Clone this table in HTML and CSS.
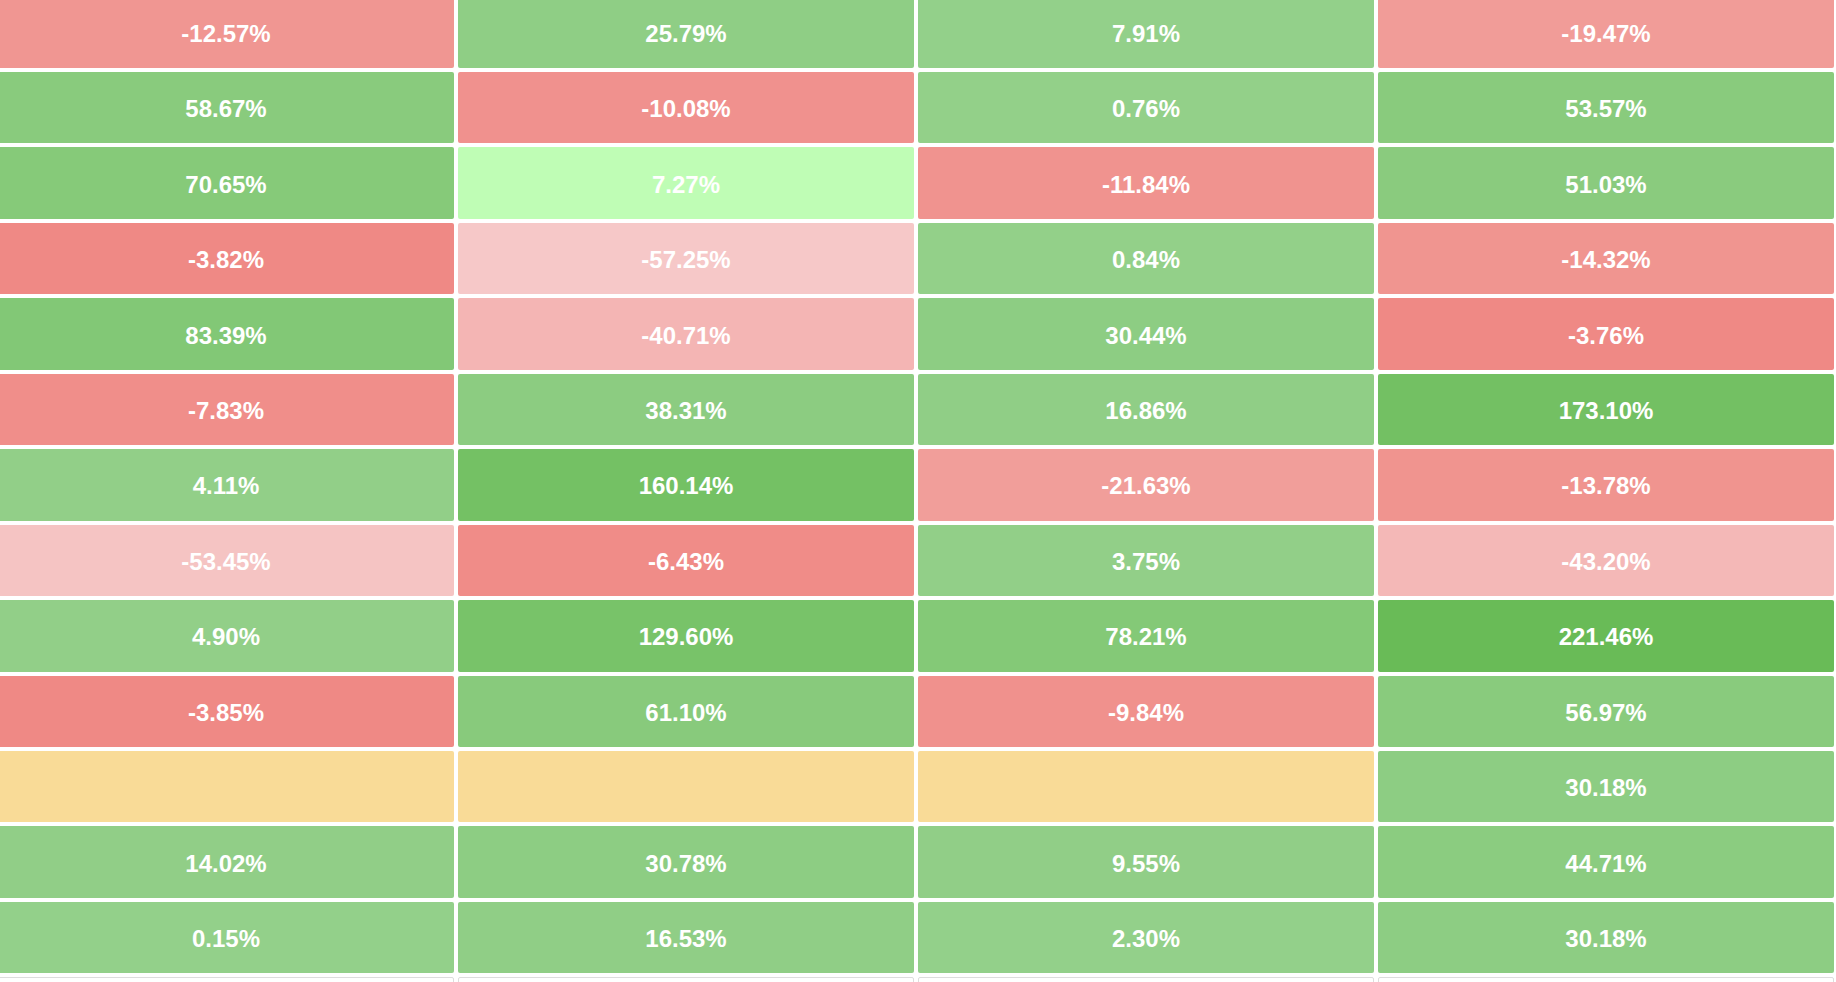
FILE: index.html
```html
<!DOCTYPE html>
<html lang="en">
<head>
<meta charset="utf-8">
<title>Returns heatmap</title>
<link rel="stylesheet" href="styles.css">
</head>
<body>
<div class="heatmap">
  <div class="cell" style="background:#f09692">-12.57%</div>
  <div class="cell" style="background:#8fce85">25.79%</div>
  <div class="cell" style="background:#93d08a">7.91%</div>
  <div class="cell" style="background:#f19c98">-19.47%</div>

  <div class="cell" style="background:#89cb7d">58.67%</div>
  <div class="cell" style="background:#f0918e">-10.08%</div>
  <div class="cell" style="background:#93d089">0.76%</div>
  <div class="cell" style="background:#89cb7d">53.57%</div>

  <div class="cell" style="background:#86ca79">70.65%</div>
  <div class="cell" style="background:#bffdb5">7.27%</div>
  <div class="cell" style="background:#f0938f">-11.84%</div>
  <div class="cell" style="background:#8acb7e">51.03%</div>

  <div class="cell" style="background:#ef8985">-3.82%</div>
  <div class="cell" style="background:#f6c8c8">-57.25%</div>
  <div class="cell" style="background:#93d089">0.84%</div>
  <div class="cell" style="background:#f09590">-14.32%</div>

  <div class="cell" style="background:#82c876">83.39%</div>
  <div class="cell" style="background:#f4b5b4">-40.71%</div>
  <div class="cell" style="background:#8dcd83">30.44%</div>
  <div class="cell" style="background:#ef8985">-3.76%</div>

  <div class="cell" style="background:#f08e8a">-7.83%</div>
  <div class="cell" style="background:#8ccc81">38.31%</div>
  <div class="cell" style="background:#90ce86">16.86%</div>
  <div class="cell" style="background:#73c063">173.10%</div>

  <div class="cell" style="background:#92cf88">4.11%</div>
  <div class="cell" style="background:#74c164">160.14%</div>
  <div class="cell" style="background:#f19e9a">-21.63%</div>
  <div class="cell" style="background:#f0948f">-13.78%</div>

  <div class="cell" style="background:#f5c4c3">-53.45%</div>
  <div class="cell" style="background:#f08c88">-6.43%</div>
  <div class="cell" style="background:#92cf88">3.75%</div>
  <div class="cell" style="background:#f4b8b7">-43.20%</div>

  <div class="cell" style="background:#92cf88">4.90%</div>
  <div class="cell" style="background:#78c369">129.60%</div>
  <div class="cell" style="background:#84c977">78.21%</div>
  <div class="cell" style="background:#69bb57">221.46%</div>

  <div class="cell" style="background:#ef8985">-3.85%</div>
  <div class="cell" style="background:#88ca7c">61.10%</div>
  <div class="cell" style="background:#f0918d">-9.84%</div>
  <div class="cell" style="background:#89cb7d">56.97%</div>

  <div class="cell empty"></div>
  <div class="cell empty"></div>
  <div class="cell empty"></div>
  <div class="cell" style="background:#8dcd83">30.18%</div>

  <div class="cell" style="background:#91ce87">14.02%</div>
  <div class="cell" style="background:#8dcd83">30.78%</div>
  <div class="cell" style="background:#91ce87">9.55%</div>
  <div class="cell" style="background:#8bcc80">44.71%</div>

  <div class="cell" style="background:#93d08a">0.15%</div>
  <div class="cell" style="background:#90ce86">16.53%</div>
  <div class="cell" style="background:#93d08a">2.30%</div>
  <div class="cell" style="background:#8dcd83">30.18%</div>

  <div class="cell blank"></div>
  <div class="cell blank"></div>
  <div class="cell blank"></div>
  <div class="cell blank"></div>
</div>
</body>
</html>
```

FILE: styles.css
```css
html, body {
  margin: 0;
  padding: 0;
  background: #ffffff;
  overflow: hidden;
}

body {
  font-family: "Liberation Sans", Arial, Helvetica, sans-serif;
}

.heatmap {
  display: grid;
  grid-template-columns: repeat(4, 456px);
  grid-auto-rows: 71.45px;
  column-gap: 4px;
  row-gap: 4px;
  margin-top: -3.45px;
  margin-left: -2px;
}

.cell {
  display: flex;
  align-items: center;
  justify-content: center;
  padding-top: 3px;
  box-sizing: border-box;
  border-radius: 2px;
  color: #ffffff;
  font-size: 24px;
  font-weight: 700;
  line-height: 1;
}

.cell.empty {
  background: #f9db97;
}

.cell.blank {
  background: #ffffff;
  border: 1px solid #dddddd;
}
```
